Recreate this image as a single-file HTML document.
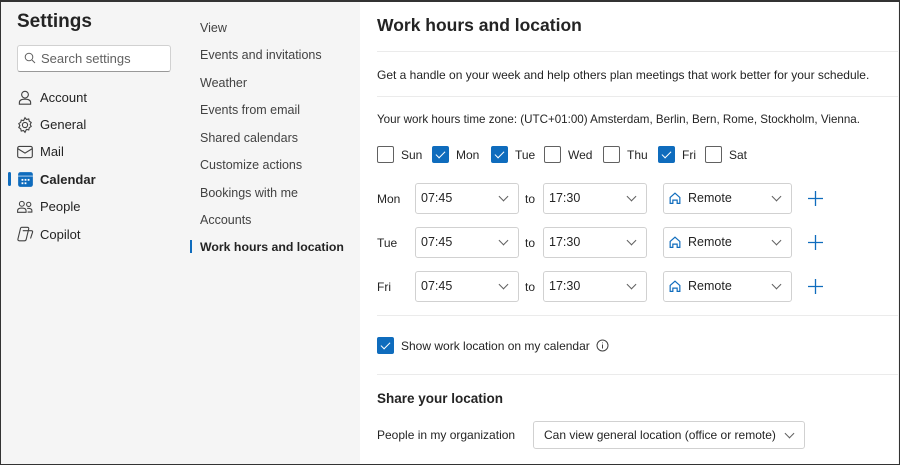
<!DOCTYPE html>
<html><head><style>
*{box-sizing:border-box;margin:0;padding:0}
body{width:900px;height:465px;overflow:hidden;font-family:"Segoe UI","Liberation Sans",sans-serif;color:#242424;background:#f5f5f5;position:relative}
.frame{position:absolute;left:0;top:0;width:900px;height:465px;border:1px solid #333;border-top-width:2px;z-index:10;pointer-events:none}
.a{position:absolute;white-space:nowrap}
.nav{font-size:13px;color:#242424}
.sub{font-size:12.5px;color:#424242}
.main{position:absolute;left:360px;top:0;width:538px;height:465px;background:#fff}
.hr{position:absolute;left:377px;right:2px;height:1px;background:#ebebeb}
.cb{position:absolute;width:17px;height:17px;border:1px solid #616161;border-radius:2px;background:#fff}
.cb.on{background:#0f6cbd;border-color:#0f6cbd}
.cb.on::after{content:"";position:absolute;left:5px;top:2px;width:4px;height:8px;border:solid #fff;border-width:0 1.5px 1.5px 0;transform:rotate(45deg)}
.dd{position:absolute;height:31px;border:1px solid #d1d1d1;border-radius:3px;background:#fff;font-size:12.5px;line-height:29px;padding-left:5px}
.chev{position:absolute;right:11px;top:9px;width:7px;height:7px;border:solid #616161;border-width:0 1px 1px 0;transform:rotate(45deg)}
.lbl{font-size:12px;color:#242424}
</style></head><body>
<div class="frame"></div>
<div class="a" style="left:17px;top:11px;font-size:19px;font-weight:600">Settings</div>
<div class="a" style="left:17px;top:45px;width:154px;height:27px;background:#fff;border:1px solid #d1d1d1;border-bottom-color:#999;border-radius:3px"></div>
<svg class="a" style="left:24px;top:52px" width="12" height="12" viewBox="0 0 12 12"><circle cx="5" cy="5" r="3.8" fill="none" stroke="#616161" stroke-width="1"/><path d="M8 8l3 3" stroke="#616161" stroke-width="1"/></svg>
<div class="a nav" style="left:41px;top:51px;color:#616161">Search settings</div>

<svg class="a" style="left:16px;top:89px" width="18" height="18" viewBox="0 0 16 16" fill="none" stroke="#424242" stroke-width="1"><circle cx="8" cy="5" r="3"/><path d="M3 12c0-2 2-3 5-3s5 1 5 3v1.5H3z"/></svg>
<div class="a nav" style="left:40px;top:90px">Account</div>
<svg class="a" style="left:16px;top:116px" width="18" height="18" viewBox="0 0 16 16" fill="none" stroke="#424242" stroke-width="1"><circle cx="8" cy="8" r="2.3"/><path d="M8 1.5l1.3 1.6 2-.5.5 2 1.7 1.1-.9 1.8.9 1.8-1.7 1.1-.5 2-2-.5L8 14.5l-1.3-1.6-2 .5-.5-2-1.7-1.1.9-1.8-.9-1.8 1.7-1.1.5-2 2 .5z"/></svg>
<div class="a nav" style="left:40px;top:117px">General</div>
<svg class="a" style="left:16px;top:143px" width="18" height="18" viewBox="0 0 16 16" fill="none" stroke="#424242" stroke-width="1"><rect x="1.5" y="3" width="13" height="10" rx="1.5"/><path d="M1.5 5l6.5 4 6.5-4"/></svg>
<div class="a nav" style="left:40px;top:144px">Mail</div>
<div class="a" style="left:8px;top:172px;width:3px;height:14px;background:#0f6cbd;border-radius:2px"></div>
<svg class="a" style="left:17px;top:171px" width="17" height="17" viewBox="0 0 15 15"><rect x="1" y="1" width="13" height="13" rx="2" fill="#0f6cbd"/><rect x="1" y="4" width="13" height="1" fill="#fff" opacity=".6"/><g fill="#fff"><rect x="4" y="7" width="1.6" height="1.6"/><rect x="6.7" y="7" width="1.6" height="1.6"/><rect x="9.4" y="7" width="1.6" height="1.6"/><rect x="4" y="10" width="1.6" height="1.6"/><rect x="6.7" y="10" width="1.6" height="1.6"/></g></svg>
<div class="a nav" style="left:40px;top:172px;font-weight:600">Calendar</div>
<svg class="a" style="left:16px;top:198px" width="18" height="18" viewBox="0 0 17 16" fill="none" stroke="#424242" stroke-width="1"><circle cx="5.5" cy="5" r="2.3"/><circle cx="12" cy="5.5" r="2"/><path d="M1.5 13v-1.5c0-1.5 1.5-2.5 4-2.5s4 1 4 2.5V13zM10.5 9.3c2.5-.3 4.5.5 4.5 2v1.5h-4"/></svg>
<div class="a nav" style="left:40px;top:199px">People</div>
<svg class="a" style="left:16px;top:225px" width="18" height="18" viewBox="0 0 16 16" fill="none" stroke="#424242" stroke-width="1"><path d="M5 2h5c1 0 1.5.6 1.3 1.5L9 13c-.3.8-.8 1-1.5 1H3c-1 0-1.5-.6-1.3-1.5L4 3c.2-.6.5-1 1-1z"/><path d="M6 5h7.5c1 0 1.5.6 1.2 1.5l-1.8 5.5"/></svg>
<div class="a nav" style="left:40px;top:227px">Copilot</div>

<div class="a sub" style="left:200px;top:21px">View</div>
<div class="a sub" style="left:200px;top:48px">Events and invitations</div>
<div class="a sub" style="left:200px;top:76px">Weather</div>
<div class="a sub" style="left:200px;top:103px">Events from email</div>
<div class="a sub" style="left:200px;top:131px">Shared calendars</div>
<div class="a sub" style="left:200px;top:158px">Customize actions</div>
<div class="a sub" style="left:200px;top:186px">Bookings with me</div>
<div class="a sub" style="left:200px;top:213px">Accounts</div>
<div class="a" style="left:190px;top:240px;width:2px;height:13px;background:#0f6cbd"></div>
<div class="a sub" style="left:200px;top:240px;font-weight:600;color:#242424;font-size:12.3px">Work hours and location</div>

<div class="main"></div>
<div class="a" style="left:377px;top:15px;font-size:17.5px;font-weight:600">Work hours and location</div>
<div class="hr" style="top:51px"></div>
<div class="a lbl" style="left:377px;top:68px">Get a handle on your week and help others plan meetings that work better for your schedule.</div>
<div class="hr" style="top:96px"></div>
<div class="a lbl" style="left:377px;top:113px;font-size:11.6px">Your work hours time zone: (UTC+01:00) Amsterdam, Berlin, Bern, Rome, Stockholm, Vienna.</div>

<div class="cb" style="left:377px;top:146px"></div><div class="a lbl" style="left:401px;top:148px">Sun</div>
<div class="cb on" style="left:432px;top:146px"></div><div class="a lbl" style="left:456px;top:148px">Mon</div>
<div class="cb on" style="left:491px;top:146px"></div><div class="a lbl" style="left:515px;top:148px">Tue</div>
<div class="cb" style="left:544px;top:146px"></div><div class="a lbl" style="left:568px;top:148px">Wed</div>
<div class="cb" style="left:603px;top:146px"></div><div class="a lbl" style="left:627px;top:148px">Thu</div>
<div class="cb on" style="left:658px;top:146px"></div><div class="a lbl" style="left:682px;top:148px">Fri</div>
<div class="cb" style="left:705px;top:146px"></div><div class="a lbl" style="left:729px;top:148px">Sat</div>

<div class="a lbl" style="left:377px;top:192px">Mon</div>
<div class="dd" style="left:415px;top:183px;width:104px">07:45<span class="chev"></span></div>
<div class="a lbl" style="left:525px;top:192px">to</div>
<div class="dd" style="left:543px;top:183px;width:104px">17:30<span class="chev"></span></div>
<div class="dd" style="left:663px;top:183px;width:129px;padding-left:24px">Remote<span class="chev"></span></div>
<svg class="a" style="left:668px;top:191px" width="14" height="14" viewBox="0 0 13 13" fill="none" stroke="#0f6cbd" stroke-width="1.1"><path d="M2 6l4.5-4 4.5 4v5.5H8.5V8.5h-4v3H2z"/></svg>
<svg class="a" style="left:808px;top:191px" width="15" height="15"><path d="M7.5 0v15M0 7.5h15" stroke="#0f6cbd" stroke-width="1.3"/></svg>

<div class="a lbl" style="left:377px;top:236px">Tue</div>
<div class="dd" style="left:415px;top:227px;width:104px">07:45<span class="chev"></span></div>
<div class="a lbl" style="left:525px;top:236px">to</div>
<div class="dd" style="left:543px;top:227px;width:104px">17:30<span class="chev"></span></div>
<div class="dd" style="left:663px;top:227px;width:129px;padding-left:24px">Remote<span class="chev"></span></div>
<svg class="a" style="left:668px;top:235px" width="14" height="14" viewBox="0 0 13 13" fill="none" stroke="#0f6cbd" stroke-width="1.1"><path d="M2 6l4.5-4 4.5 4v5.5H8.5V8.5h-4v3H2z"/></svg>
<svg class="a" style="left:808px;top:235px" width="15" height="15"><path d="M7.5 0v15M0 7.5h15" stroke="#0f6cbd" stroke-width="1.3"/></svg>

<div class="a lbl" style="left:377px;top:280px">Fri</div>
<div class="dd" style="left:415px;top:271px;width:104px">07:45<span class="chev"></span></div>
<div class="a lbl" style="left:525px;top:280px">to</div>
<div class="dd" style="left:543px;top:271px;width:104px">17:30<span class="chev"></span></div>
<div class="dd" style="left:663px;top:271px;width:129px;padding-left:24px">Remote<span class="chev"></span></div>
<svg class="a" style="left:668px;top:279px" width="14" height="14" viewBox="0 0 13 13" fill="none" stroke="#0f6cbd" stroke-width="1.1"><path d="M2 6l4.5-4 4.5 4v5.5H8.5V8.5h-4v3H2z"/></svg>
<svg class="a" style="left:808px;top:279px" width="15" height="15"><path d="M7.5 0v15M0 7.5h15" stroke="#0f6cbd" stroke-width="1.3"/></svg>

<div class="hr" style="top:315px"></div>
<div class="cb on" style="left:377px;top:337px"></div>
<div class="a lbl" style="left:401px;top:339px">Show work location on my calendar</div>
<svg class="a" style="left:596px;top:339px" width="13" height="13" viewBox="0 0 13 13" fill="none" stroke="#424242" stroke-width="1"><circle cx="6.5" cy="6.5" r="5.5"/><path d="M6.5 5.5v4M6.5 3.5v.8"/></svg>
<div class="hr" style="top:374px"></div>
<div class="a" style="left:377px;top:391px;font-size:13.5px;font-weight:600">Share your location</div>
<div class="a lbl" style="left:377px;top:428px">People in my organization</div>
<div class="dd" style="left:533px;top:421px;width:272px;height:28px;line-height:26px;padding-left:10px;font-size:12px">Can view general location (office or remote)<span class="chev" style="top:8px"></span></div>
</body></html>
